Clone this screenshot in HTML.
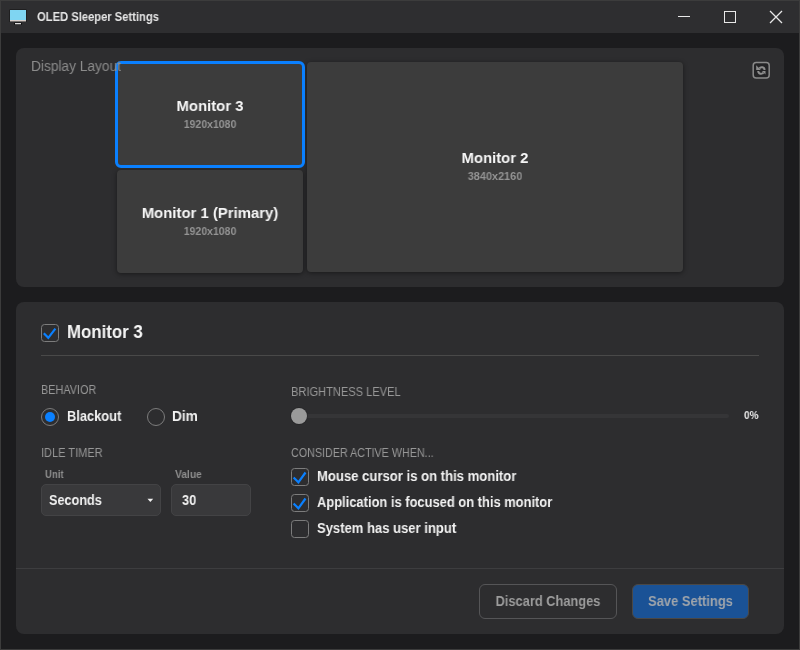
<!DOCTYPE html>
<html><head><meta charset="utf-8">
<style>
*{margin:0;padding:0;box-sizing:border-box}
html,body{width:800px;height:650px;overflow:hidden;background:#1c1c1e;font-family:"Liberation Sans",sans-serif}
.abs{position:absolute}
.t{position:absolute;white-space:nowrap;line-height:1;will-change:transform;transform-origin:0 0}
.c{transform-origin:50% 0}
#win{position:absolute;left:0;top:0;width:800px;height:650px;background:#1c1c1e;border:1px solid #3c3c3c}
#title{position:absolute;left:1px;top:1px;width:798px;height:32px;background:#2e2e30}
.panel{position:absolute;background:#2d2d2f;border-radius:8px}
.mon{position:absolute;background:#3c3c3c;border-radius:4px;box-shadow:0 1px 5px rgba(0,0,0,.45)}
.mname{color:#f6f6f6;font-weight:bold;font-size:15.3px}
.mres{color:#949494;font-size:11.5px;font-weight:bold}
.lbl{color:#979797;font-size:12px}
.txt{color:#f2f2f2;font-weight:bold;font-size:14.2px}
.cb{position:absolute;width:18px;height:18px;border:1.5px solid #7c7c7c;border-radius:3.5px}
.rd{position:absolute;width:18px;height:18px;border:1.5px solid #7c7c7c;border-radius:50%}
</style></head><body>
<div id="win"></div>
<div id="title"></div>
<!-- title icon -->
<svg class="abs" style="left:9px;top:9px" width="18" height="16" viewBox="0 0 18 16">
<rect x="0.5" y="0.5" width="17" height="12.5" fill="#111"/>
<rect x="1" y="1" width="16" height="10" fill="#7fd5f2"/>
<rect x="1" y="11" width="16" height="1.5" fill="#d8d0cc"/>
<rect x="5" y="13.5" width="8" height="2.5" rx="1" fill="#111"/>
<rect x="6" y="14" width="6" height="1.3" fill="#ddd"/>
</svg>
<div id="ttl" class="t" style="left:37px;top:11px;color:#e6e6e6;font-size:12px;font-weight:bold;transform:scaleX(0.933)">OLED Sleeper Settings</div>
<!-- window controls -->
<div class="abs" style="left:678px;top:16px;width:12px;height:1px;background:#e8e8e8"></div>
<div class="abs" style="left:724px;top:11px;width:12px;height:12px;border:1.3px solid #e8e8e8"></div>
<svg class="abs" style="left:769px;top:10px" width="14" height="14"><path d="M1 1L13 13M13 1L1 13" stroke="#e8e8e8" stroke-width="1.3"/></svg>

<!-- panel 1 -->
<div class="panel" style="left:16px;top:48px;width:768px;height:239px"></div>
<div class="mon" style="left:117px;top:170px;width:186px;height:103px"></div>
<div class="mon" style="left:307px;top:62px;width:376px;height:210px"></div>
<div class="mon" style="left:115px;top:61px;width:190px;height:107px;border:3px solid #0a80ff;box-shadow:none;border-radius:6px"></div>
<div id="DL" class="t" style="left:31px;top:59px;color:#8c8c8c;font-size:14px;transform:scaleX(0.98)">Display Layout</div>
<div id="M3" class="t c mname" style="left:117px;width:186px;text-align:center;top:98.3px;transform:scaleX(0.971)">Monitor 3</div>
<div id="res3" class="t c mres" style="left:117px;width:186px;text-align:center;top:119px;transform:scaleX(0.912)">1920x1080</div>
<div id="M1" class="t c mname" style="left:117px;width:186px;text-align:center;top:205.3px;transform:scaleX(0.974)">Monitor 1 (Primary)</div>
<div id="res1" class="t c mres" style="left:117px;width:186px;text-align:center;top:226px;transform:scaleX(0.912)">1920x1080</div>
<div id="M2" class="t c mname" style="left:307px;width:376px;text-align:center;top:150.3px;transform:scaleX(0.968)">Monitor 2</div>
<div id="res2" class="t c mres" style="left:307px;width:376px;text-align:center;top:171px;transform:scaleX(0.946)">3840x2160</div>
<!-- refresh icon -->
<svg class="abs" style="left:750px;top:59px" width="22" height="22" viewBox="0 0 22 22">
<rect x="3.2" y="3.45" width="16" height="15.5" rx="3" fill="#242426" stroke="#8a8a8a" stroke-width="1.5"/>
<path d="M9.33 9.6 A2.8 2.8 0 0 1 14.55 11" fill="none" stroke="#8e8e8e" stroke-width="2"/>
<path d="M6.2 6.2 L6.2 11 L10.8 11 Z" fill="#8e8e8e"/>
<path d="M8.2 12 A2.8 2.8 0 0 0 13.42 13.4" fill="none" stroke="#8e8e8e" stroke-width="2"/>
<path d="M11.9 12 L15.5 12 L15.5 15.6 Z" fill="#8e8e8e"/>
</svg>

<!-- panel 2 -->
<div class="panel" style="left:16px;top:302px;width:768px;height:332px"></div>
<div class="cb" style="left:41px;top:324px"></div>
<svg class="abs" style="left:41px;top:324px" width="18" height="18"><path d="M2.8 9.3 L7.3 13.8 L14.4 4.6" fill="none" stroke="#0a80ff" stroke-width="2.2"/></svg>
<div id="head" class="t" style="left:67px;top:323.15px;color:#f6f6f6;font-weight:bold;font-size:18px;transform:scaleX(0.935)">Monitor 3</div>
<div class="abs" style="left:41px;top:355px;width:718px;height:1px;background:#494949"></div>

<div id="BEH" class="t lbl" style="left:41px;top:384px;transform:scaleX(0.904)">BEHAVIOR</div>
<div class="rd" style="left:41px;top:408px"></div>
<div class="abs" style="left:45px;top:412px;width:10px;height:10px;background:#0a80ff;border-radius:50%"></div>
<div id="Blackout" class="t txt" style="left:67px;top:409.4px;transform:scaleX(0.906)">Blackout</div>
<div class="rd" style="left:147px;top:408px"></div>
<div id="Dim" class="t txt" style="left:172px;top:409.4px;transform:scaleX(0.96)">Dim</div>

<div id="IDLE" class="t lbl" style="left:41px;top:447px;transform:scaleX(0.917)">IDLE TIMER</div>
<div id="Unit" class="t lbl" style="left:45px;top:469px;font-size:11px;font-weight:bold;color:#8e8e8e;transform:scaleX(0.87)">Unit</div>
<div id="Value" class="t lbl" style="left:175px;top:469px;font-size:11px;font-weight:bold;color:#8e8e8e;transform:scaleX(0.935)">Value</div>
<div class="abs" style="left:41px;top:484px;width:120px;height:32px;background:#39393b;border:1px solid #434345;border-radius:5px"></div>
<div id="Seconds" class="t txt" style="left:49px;top:493.4px;transform:scaleX(0.893)">Seconds</div>
<svg class="abs" style="left:147px;top:498px" width="7" height="5"><path d="M0.5 0.8 L6.2 0.8 L3.35 4 Z" fill="#f0f0f0"/></svg>
<div class="abs" style="left:171px;top:484px;width:80px;height:32px;background:#39393b;border:1px solid #434345;border-radius:5px"></div>
<div id="v30" class="t txt" style="left:182px;top:493.4px;transform:scaleX(0.9)">30</div>

<div id="BRIGHT" class="t lbl" style="left:291px;top:386px;transform:scaleX(0.924)">BRIGHTNESS LEVEL</div>
<div class="abs" style="left:291px;top:414px;width:438px;height:4px;background:#353537;border-radius:2px"></div>
<div class="abs" style="left:291px;top:408px;width:16px;height:16px;background:#9a9a9a;border-radius:50%;box-shadow:0 0 0 1px rgba(0,0,0,.15)"></div>
<div id="pct" class="t" style="left:744px;top:410px;color:#e8e8e8;font-weight:bold;font-size:11.5px;transform:scaleX(0.87)">0%</div>

<div id="CONS" class="t lbl" style="left:291px;top:447px;transform:scaleX(0.895)">CONSIDER ACTIVE WHEN...</div>
<div class="cb" style="left:291px;top:468px"></div>
<svg class="abs" style="left:291px;top:468px" width="18" height="18"><path d="M2.6 9.5 L7.4 14.3 L14.5 4.5" fill="none" stroke="#0a80ff" stroke-width="2.2"/></svg>
<div id="Mouse" class="t txt" style="left:317px;top:469.4px;transform:scaleX(0.923)">Mouse cursor is on this monitor</div>
<div class="cb" style="left:291px;top:494px"></div>
<svg class="abs" style="left:291px;top:494px" width="18" height="18"><path d="M2.6 9.5 L7.4 14.3 L14.5 4.5" fill="none" stroke="#0a80ff" stroke-width="2.2"/></svg>
<div id="App" class="t txt" style="left:317px;top:495.4px;transform:scaleX(0.91)">Application is focused on this monitor</div>
<div class="cb" style="left:291px;top:520px"></div>
<div id="Sys" class="t txt" style="left:317px;top:521.4px;transform:scaleX(0.919)">System has user input</div>

<div class="abs" style="left:16px;top:568px;width:768px;height:1px;background:#3d3d3f"></div>
<div class="abs" style="left:479px;top:584px;width:138px;height:35px;border:1px solid #555557;border-radius:6px"></div>
<div id="Discard" class="t c txt" style="left:479px;width:138px;text-align:center;top:594.4px;color:#9c9c9c;transform:scaleX(0.904)">Discard Changes</div>
<div class="abs" style="left:632px;top:584px;width:117px;height:35px;background:#1a5296;border:1px solid #4a4846;border-radius:6px"></div>
<div id="Save" class="t c txt" style="left:632px;width:117px;text-align:center;top:594.4px;color:#a0a5ab;transform:scaleX(0.913)">Save Settings</div>
</body></html>
